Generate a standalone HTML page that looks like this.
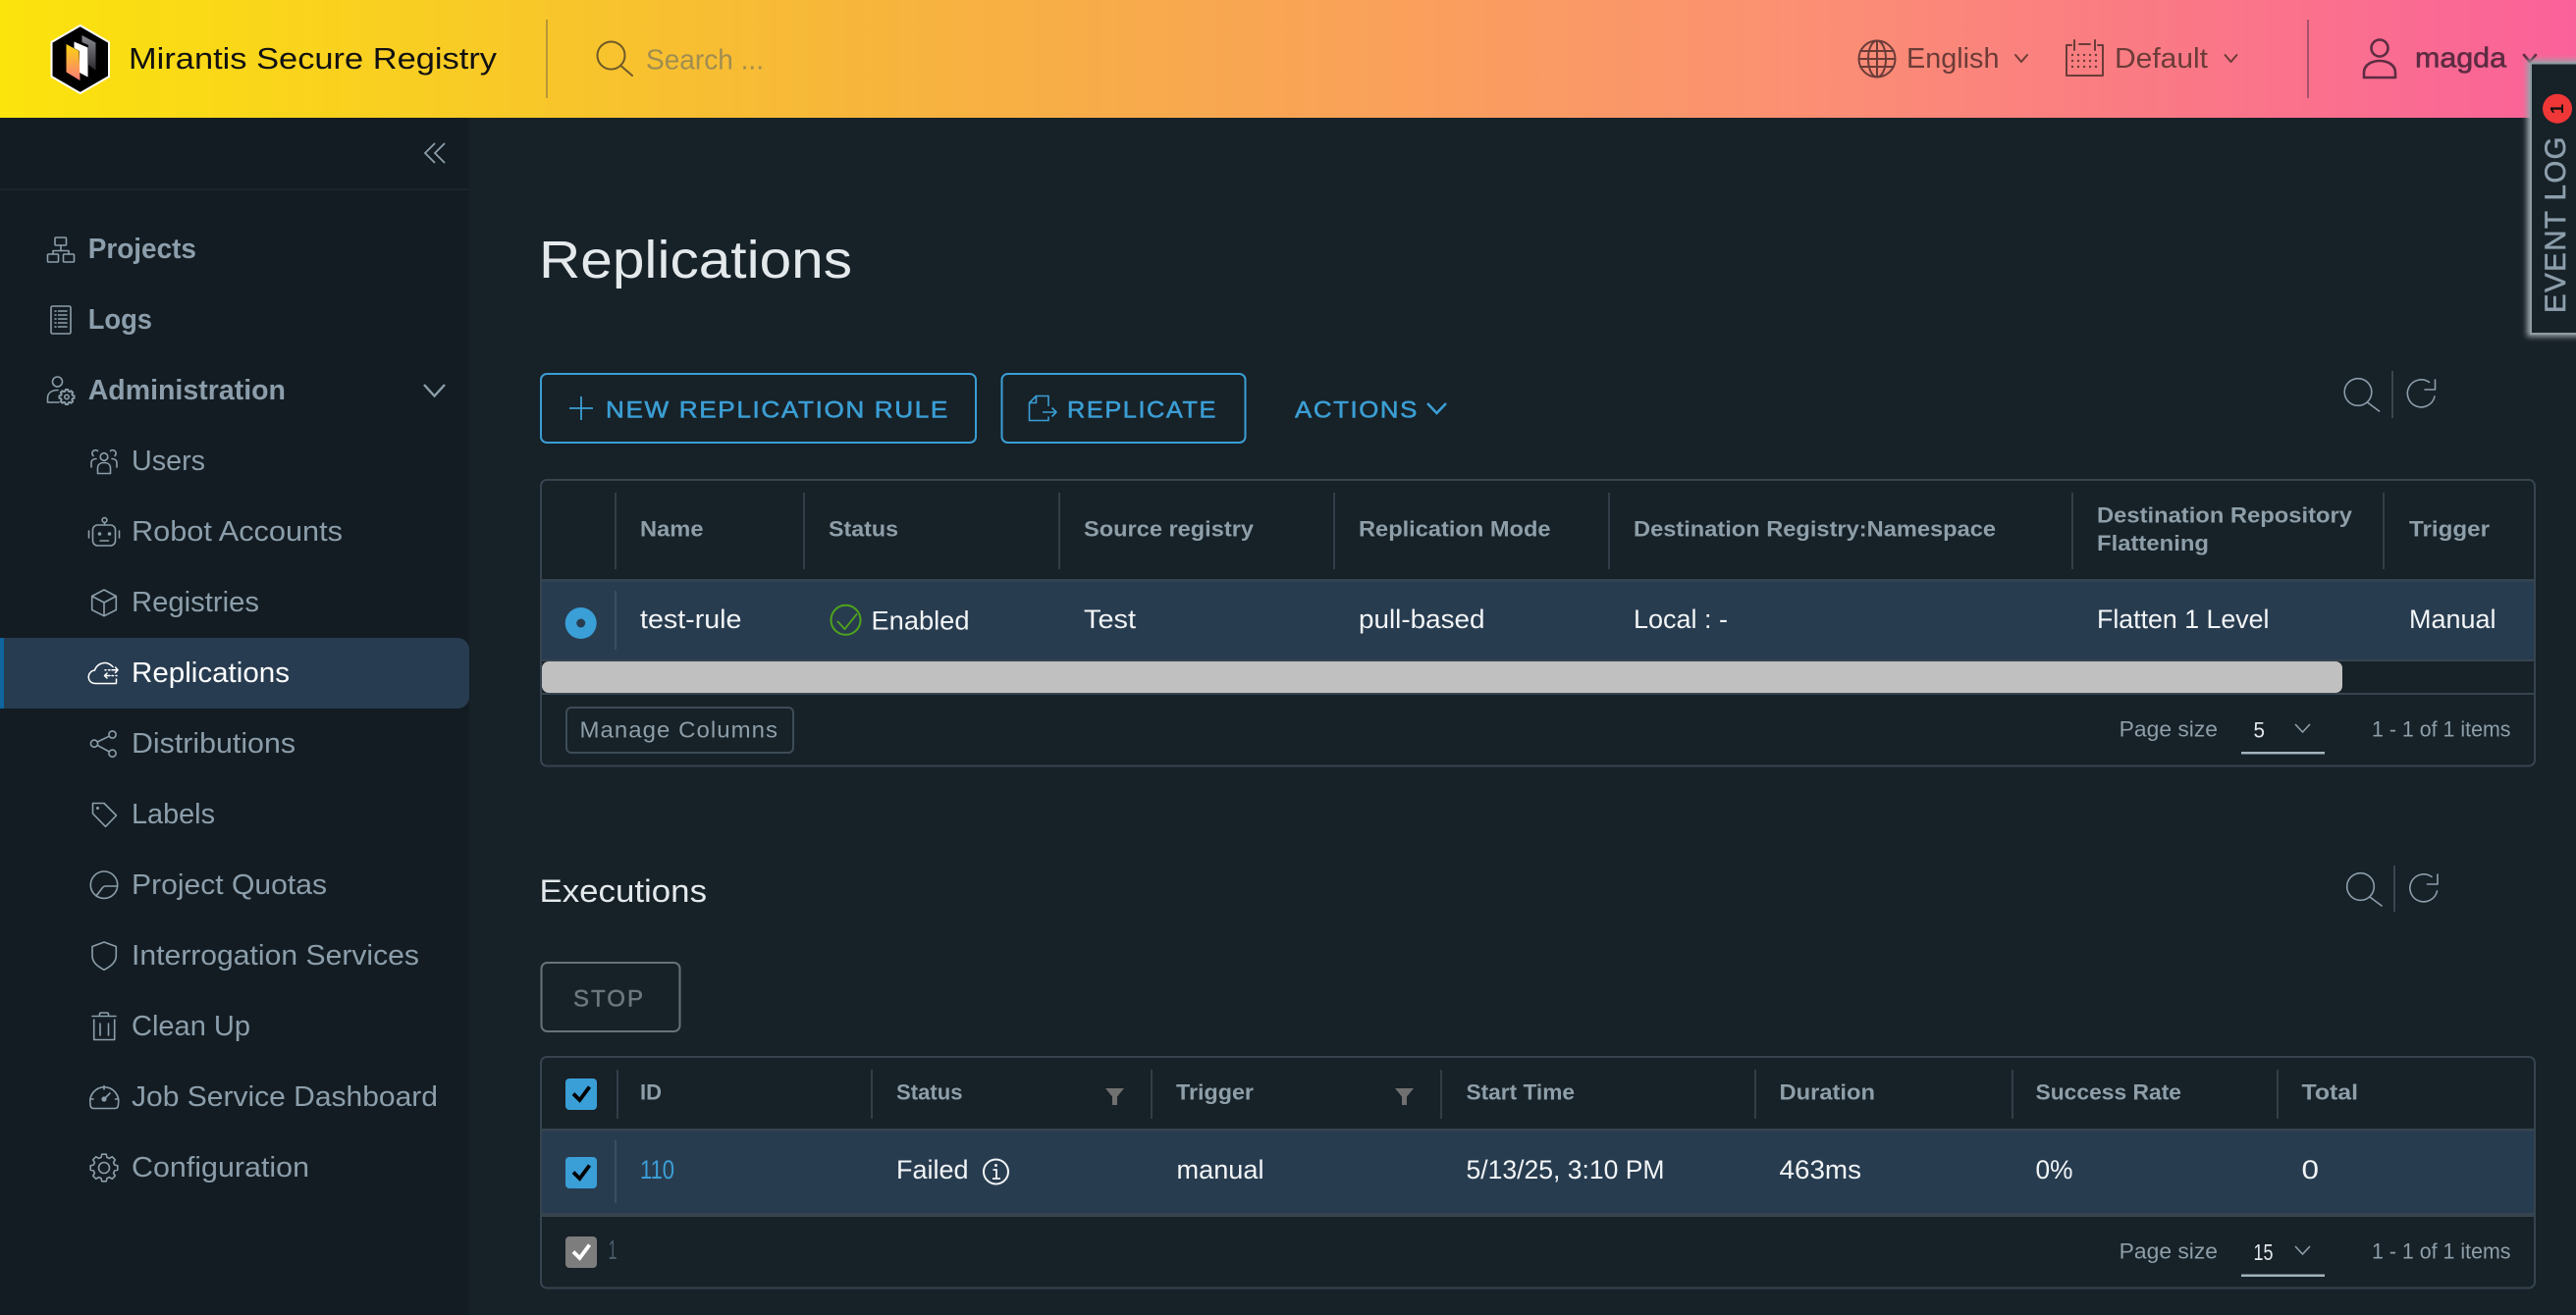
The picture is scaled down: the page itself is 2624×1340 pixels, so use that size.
<!DOCTYPE html>
<html lang="en">
<head>
<meta charset="utf-8">
<title>Replications - Mirantis Secure Registry</title>
<style>
html,body{margin:0;padding:0;width:2624px;height:1340px;overflow:hidden;background:#172128}
svg{display:block;position:absolute;left:0;top:0}
text{font-family:"Liberation Sans",sans-serif;white-space:pre}
.nav{font-size:29px;fill:#8c9eab}
.navb{font-size:29px;fill:#8c9eab;font-weight:700}
.th{font-size:22px;fill:#8e9fa9;font-weight:700}
.td{font-size:27px;fill:#f2f5f6}
.pg{font-size:22px;fill:#8e9fa9}
.btn{font-size:24px;fill:#3b9ed4;stroke:#3b9ed4;stroke-width:.55px;letter-spacing:1.5px}
.ic{fill:none;stroke:#8c9eab;stroke-width:1.6;stroke-linejoin:round;stroke-linecap:round}
.hd{fill:none;stroke:#6b3c38;stroke-width:2;stroke-linecap:round;stroke-linejoin:round}
</style>
</head>
<body>
<svg xmlns="http://www.w3.org/2000/svg" width="2624" height="1340" viewBox="0 0 2624 1340">
<defs>
<linearGradient id="hg" x1="0" y1="0" x2="1" y2="0">
<stop offset="0" stop-color="#fbe40c"/>
<stop offset="0.34" stop-color="#f7b53c"/>
<stop offset="0.68" stop-color="#fb9270"/>
<stop offset="1" stop-color="#fa619a"/>
</linearGradient>
<linearGradient id="lg1" x1="0" y1="0" x2="0" y2="1">
<stop offset="0" stop-color="#fbd40f"/>
<stop offset="1" stop-color="#fb7a7a"/>
</linearGradient>
<linearGradient id="lg2" x1="0" y1="0" x2="0" y2="1">
<stop offset="0" stop-color="#8b8b93"/>
<stop offset="1" stop-color="#2a2a2e"/>
</linearGradient>
<filter id="blur" x="-20%" y="-10%" width="140%" height="120%"><feGaussianBlur stdDeviation="3"/></filter>
<path id="gear" d="M-2.2,-13.8 L2.2,-13.8 L3,-10.6 L5.4,-9.6 L8.2,-11.3 L11.3,-8.2 L9.6,-5.4 L10.6,-3 L13.8,-2.2 L13.8,2.2 L10.6,3 L9.6,5.4 L11.3,8.2 L8.2,11.3 L5.4,9.6 L3,10.6 L2.2,13.8 L-2.2,13.8 L-3,10.6 L-5.4,9.6 L-8.2,11.3 L-11.3,8.2 L-9.6,5.4 L-10.6,3 L-13.8,2.2 L-13.8,-2.2 L-10.6,-3 L-9.6,-5.4 L-11.3,-8.2 L-8.2,-11.3 L-5.4,-9.6 L-3,-10.6 Z"/>
<g id="tsearch"><circle cx="2402" cy="399.5" r="13.8"/><path d="M2411.5,410 L2423.5,419"/></g>
<g id="trefresh"><path d="M2480,404 A14,14 0 1 1 2474.5,389.5"/><path d="M2480.5,387 V397 H2470"/></g>
</defs>

<!-- backgrounds -->
<rect width="2624" height="1340" fill="#172128"/>
<rect x="0" y="120" width="478" height="1220" fill="#131c22"/>
<rect x="0" y="192" width="478" height="2" fill="#1c252b"/>
<rect width="2624" height="120" fill="url(#hg)"/>

<!-- logo -->
<polygon points="81.7,26 111,43 111,78 81.7,95 52.5,78 52.5,43" fill="#000" stroke="#fff" stroke-width="2"/>
<polygon points="83.5,36 97.5,43.5 97.5,71.5 90,66 90,46 83.5,43" fill="url(#lg2)"/>
<polygon points="75.5,42.5 89.5,48.5 89.5,78.5 81,74 81,52 75.5,49" fill="#fff"/>
<polygon points="67.5,45 80.5,52 81.5,82 67.5,73.5" fill="url(#lg1)"/>
<text x="131" y="70" font-size="31" fill="#111" textLength="375" lengthAdjust="spacingAndGlyphs">Mirantis Secure Registry</text>
<rect x="556" y="20" width="2" height="80" fill="#b5983a"/>

<!-- header search -->
<g fill="none" stroke="#6e5a28" stroke-width="2" stroke-linecap="round"><circle cx="622.5" cy="56.5" r="14"/><path d="M632.5,67 L644,77"/></g>
<text x="658" y="70.5" font-size="29" fill="#a08d50" textLength="120" lengthAdjust="spacingAndGlyphs">Search ...</text>

<!-- header right -->
<g class="hd">
<circle cx="1912" cy="60" r="18.5"/><ellipse cx="1912" cy="60" rx="9" ry="18.5"/><path d="M1912,41.5 V78.5 M1895,52 H1929 M1895,68 H1929 M1893.5,60 H1930.5"/>
<path d="M2053,56 L2059,63 L2065,56"/>
<path d="M2110,46 H2105 V77 H2142 V46 H2137 M2113,41 V51 M2134,41 V51 M2118,45 H2129"/>
<path d="M2266.5,56 L2272.5,63 L2278.5,56"/>
</g>
<g fill="#6b3c38">
<circle cx="2111" cy="56" r="1.2"/><circle cx="2117" cy="56" r="1.2"/><circle cx="2123" cy="56" r="1.2"/><circle cx="2129" cy="56" r="1.2"/><circle cx="2135" cy="56" r="1.2"/>
<circle cx="2111" cy="62" r="1.2"/><circle cx="2117" cy="62" r="1.2"/><circle cx="2123" cy="62" r="1.2"/><circle cx="2129" cy="62" r="1.2"/><circle cx="2135" cy="62" r="1.2"/>
<circle cx="2111" cy="68" r="1.2"/><circle cx="2117" cy="68" r="1.2"/><circle cx="2123" cy="68" r="1.2"/><circle cx="2129" cy="68" r="1.2"/><circle cx="2135" cy="68" r="1.2"/>
</g>
<text x="1942" y="69" font-size="29" fill="#6b3c38" textLength="94.5" lengthAdjust="spacingAndGlyphs">English</text>
<text x="2154" y="69" font-size="29" fill="#6b3c38" textLength="95" lengthAdjust="spacingAndGlyphs">Default</text>
<rect x="2350" y="20" width="2" height="80" fill="#a9506c"/>
<g fill="none" stroke="#5d2c42" stroke-width="2.6" stroke-linejoin="round" stroke-linecap="round">
<circle cx="2424" cy="49" r="8.5"/>
<path d="M2408,79 V74 C2408,66 2416,62 2424,62 C2432,62 2440,66 2440,74 V79 Z"/>
<path d="M2571,56 L2577,63 L2583,56"/>
</g>
<text x="2460" y="68.5" font-size="29" fill="#5d2c42" stroke="#5d2c42" stroke-width=".6" textLength="93" lengthAdjust="spacingAndGlyphs">magda</text>

<!-- sidebar top -->
<path d="M443,146 L433,156 L443,166 M453,146 L443,156 L453,166" fill="none" stroke="#8c9eab" stroke-width="1.8"/>
<path d="M432,392 L442.5,403.5 L453,392" fill="none" stroke="#8c9eab" stroke-width="2.4"/>

<!-- active item -->
<path d="M0,650 H466 a12,12 0 0 1 12,12 V710 a12,12 0 0 1 -12,12 H0 Z" fill="#273c50"/>
<rect x="0" y="650" width="4" height="72" fill="#0f659d"/>

<!-- sidebar labels -->
<text class="navb" x="89.7" y="263" textLength="110.3" lengthAdjust="spacingAndGlyphs">Projects</text>
<text class="navb" x="89.7" y="335" textLength="65.3" lengthAdjust="spacingAndGlyphs">Logs</text>
<text class="navb" x="89.7" y="407" textLength="201.3" lengthAdjust="spacingAndGlyphs">Administration</text>
<text class="nav" x="134" y="479" textLength="75" lengthAdjust="spacingAndGlyphs">Users</text>
<text class="nav" x="134" y="551" textLength="215" lengthAdjust="spacingAndGlyphs">Robot Accounts</text>
<text class="nav" x="134" y="623" textLength="130" lengthAdjust="spacingAndGlyphs">Registries</text>
<text class="nav" x="134" y="695" textLength="161" lengthAdjust="spacingAndGlyphs" style="fill:#fff">Replications</text>
<text class="nav" x="134" y="767" textLength="167" lengthAdjust="spacingAndGlyphs">Distributions</text>
<text class="nav" x="134" y="839" textLength="85" lengthAdjust="spacingAndGlyphs">Labels</text>
<text class="nav" x="134" y="911" textLength="199" lengthAdjust="spacingAndGlyphs">Project Quotas</text>
<text class="nav" x="134" y="983" textLength="293" lengthAdjust="spacingAndGlyphs">Interrogation Services</text>
<text class="nav" x="134" y="1055" textLength="121" lengthAdjust="spacingAndGlyphs">Clean Up</text>
<text class="nav" x="134" y="1127" textLength="312" lengthAdjust="spacingAndGlyphs">Job Service Dashboard</text>
<text class="nav" x="134" y="1199" textLength="181" lengthAdjust="spacingAndGlyphs">Configuration</text>

<!-- sidebar icons -->
<g class="ic">
<!-- projects -->
<rect x="56" y="242" width="11.5" height="8" rx="1"/><rect x="48.5" y="259" width="11" height="8" rx="1"/><rect x="64.5" y="259" width="11" height="8" rx="1"/>
<path d="M62,250 V255.5 M54,259 V255.5 H70 V259"/>
<!-- logs -->
<rect x="52" y="312" width="20" height="28" rx="1.5"/>
<path d="M56,317 H57 M59.5,317 H68 M56,321 H57 M59.5,321 H68 M56,325 H57 M59.5,325 H68 M56,329 H57 M59.5,329 H68 M56,333 H57 M59.5,333 H68"/>
<!-- admin -->
<circle cx="58.5" cy="389" r="5"/>
<path d="M48.5,410 V406 C48.5,400 53,397.5 59,397.5 M48.5,410 H60"/>
<use href="#gear" transform="translate(68,404.5) scale(0.55)" style="stroke-width:3.5"/>
<circle cx="68" cy="404.5" r="2.2"/>
<!-- users -->
<circle cx="106" cy="465.5" r="3.8"/>
<path d="M99.5,482.5 V477 C99.5,473.5 102,471.5 106,471.5 C110,471.5 112.5,473.5 112.5,477 V482.5 Z"/>
<path d="M95,464.5 A3.2,3.2 0 1 1 99.5,459.5 M117,464.5 A3.2,3.2 0 1 0 112.5,459.5 M93,476 V472 C93,469 95,467.5 98,467.5 M119,476 V472 C119,469 117,467.5 114,467.5"/>
<!-- robot -->
<rect x="94.5" y="535" width="23" height="21" rx="5"/>
<circle cx="106.5" cy="530" r="2.4"/>
<path d="M106.5,532.5 V535 M102,551 H110.5 M90.5,541 V548 M121.5,541 V548"/>
<circle cx="101.5" cy="544" r="1" fill="#8c9eab"/><circle cx="111.5" cy="544" r="1" fill="#8c9eab"/>
<!-- cube -->
<path d="M106,601 L118.3,607.5 V621.5 L106,627.7 L93.7,621.5 V607.5 Z M93.7,607.5 L106,614 L118.3,607.5 M106,614 V627.7"/>
<!-- share -->
<circle cx="114.5" cy="748.5" r="3.6"/><circle cx="96" cy="757.7" r="3.6"/><circle cx="114.5" cy="767.7" r="3.6"/>
<path d="M111.3,750.2 L99.2,756 M99.2,759.4 L111.3,766"/>
<!-- tag -->
<path d="M94.5,818.5 H106 L118.5,831 L107.5,842.3 L94.5,829 Z"/>
<circle cx="99.5" cy="823.5" r="0.7" fill="#8c9eab"/>
<!-- quota -->
<circle cx="106" cy="901.7" r="13.7"/>
<path d="M98,913 L104.5,904.5 Q105.5,903 108,903 H119.5"/>
<!-- shield -->
<path d="M106,960 L118.3,964.5 V974 C118.3,981 112,985 106,988.3 C100,985 94,981 94,974 V964.5 Z"/>
<!-- trash -->
<path d="M94,1035.5 H118 M101.5,1035.5 V1033 Q101.5,1032 103,1032 H109 Q110.5,1032 110.5,1033 V1035.5 M95.7,1039 V1059.5 H116.7 V1039 M102,1043 V1055 M110.5,1043 V1055"/>
<!-- dashboard -->
<path d="M95.5,1129.5 Q92,1129.5 92,1125 A14.5,14.5 0 1 1 120.5,1125 Q120.5,1129.5 117,1129.5 Z"/>
<path d="M106,1106.5 V1110 M92,1120 H95 M117.5,1120 H120.5 M106,1120 L112,1114"/>
<circle cx="106" cy="1120" r="1.8" fill="#8c9eab"/>
<!-- gear -->
<use href="#gear" transform="translate(106,1190)"/>
<circle cx="106" cy="1190" r="5.5"/>
</g>
<!-- cloud -->
<g fill="none" stroke="#fff" stroke-width="1.5" stroke-linecap="round" stroke-linejoin="round">
<path d="M118,696.5 H97.5 C88,696.5 88,684 96.5,683 C98,678 103,675 108,675.5 C111,676 113,677.5 115,679.5"/>
<path d="M107,682.8 H108 M110.5,682.8 H112 M114,682.8 H120 M117.5,680 L120,682.8 L117.5,685.5"/>
<path d="M119,688.5 H118 M115.5,688.5 H114 M112,688.5 H106.5 M109,686 L106.5,688.5 L109,691 M118.5,692 V696"/>
</g>

<!-- title -->
<text x="549" y="283" font-size="54" fill="#e4e9ec" textLength="319" lengthAdjust="spacingAndGlyphs">Replications</text>

<!-- buttons -->
<rect x="551" y="381" width="443" height="70" rx="6" fill="none" stroke="#3b9ed4" stroke-width="2"/>
<path d="M592,404 V428 M580,416 H604" stroke="#3b9ed4" stroke-width="1.8" fill="none"/>
<text class="btn" x="617" y="425.5" textLength="350" lengthAdjust="spacingAndGlyphs">NEW REPLICATION RULE</text>
<rect x="1020.5" y="381" width="248" height="70" rx="6" fill="none" stroke="#3b9ed4" stroke-width="2"/>
<path d="M1068,414 V403.5 H1055.5 L1048.5,410.5 V428.5 H1068 V424.5 M1048.5,410.5 H1055.5 V403.5 M1062,420 H1076 M1071.5,415.5 L1076,420 L1071.5,424.5" stroke="#3b9ed4" stroke-width="1.6" fill="none" stroke-linejoin="round"/>
<text class="btn" x="1087" y="425.5" textLength="153" lengthAdjust="spacingAndGlyphs">REPLICATE</text>
<text class="btn" x="1319" y="425.5" textLength="126" lengthAdjust="spacingAndGlyphs">ACTIONS</text>
<path d="M1454,411 L1463.5,421 L1473,411" fill="none" stroke="#3b9ed4" stroke-width="2.6"/>

<!-- toolbar 1 -->
<g class="ic"><use href="#tsearch"/><use href="#trefresh"/></g>
<rect x="2436" y="378" width="2" height="48" fill="#3a4650"/>

<!-- table 1 -->
<rect x="551.5" y="592" width="2030" height="80" fill="#283c50"/>
<rect x="552" y="590" width="2030" height="2.5" fill="#36444f"/>
<rect x="552" y="672" width="2030" height="2" fill="#36444f"/>
<rect x="552" y="706" width="2030" height="2" fill="#36444f"/>
<rect x="552" y="674" width="1834" height="32" rx="7" fill="#c0c0c0"/>
<rect x="551" y="489" width="2031" height="291.5" rx="6" fill="none" stroke="#36444f" stroke-width="2"/>
<g fill="#323e47">
<rect x="626" y="502" width="2" height="78"/><rect x="818" y="502" width="2" height="78"/><rect x="1078" y="502" width="2" height="78"/><rect x="1358" y="502" width="2" height="78"/><rect x="1638" y="502" width="2" height="78"/><rect x="2110" y="502" width="2" height="78"/><rect x="2427" y="502" width="2" height="78"/>
</g>
<rect x="626" y="602" width="2" height="60" fill="#3a4f63"/>
<text class="th" x="652" y="546.5" textLength="64.5" lengthAdjust="spacingAndGlyphs">Name</text>
<text class="th" x="844" y="546.5" textLength="71" lengthAdjust="spacingAndGlyphs">Status</text>
<text class="th" x="1104" y="546.5" textLength="173" lengthAdjust="spacingAndGlyphs">Source registry</text>
<text class="th" x="1384" y="546.5" textLength="195.5" lengthAdjust="spacingAndGlyphs">Replication Mode</text>
<text class="th" x="1664" y="546.5" textLength="369" lengthAdjust="spacingAndGlyphs">Destination Registry:Namespace</text>
<text class="th" x="2136" y="532.5" textLength="260" lengthAdjust="spacingAndGlyphs">Destination Repository</text>
<text class="th" x="2136" y="561" textLength="114" lengthAdjust="spacingAndGlyphs">Flattening</text>
<text class="th" x="2454" y="546.5" textLength="82" lengthAdjust="spacingAndGlyphs">Trigger</text>
<circle cx="591.7" cy="635" r="16" fill="#3b9fd7"/><circle cx="591.7" cy="635" r="4.5" fill="#273c50"/>
<text class="td" x="652" y="640" textLength="103.5" lengthAdjust="spacingAndGlyphs">test-rule</text>
<circle cx="861.5" cy="631.8" r="15" fill="none" stroke="#4fa41a" stroke-width="2"/>
<path d="M853,633 L860.5,641 L873,625.5" fill="none" stroke="#4fa41a" stroke-width="1.8"/>
<text class="td" x="887.5" y="641.5" textLength="100" lengthAdjust="spacingAndGlyphs">Enabled</text>
<text class="td" x="1104" y="640" textLength="53" lengthAdjust="spacingAndGlyphs">Test</text>
<text class="td" x="1384" y="640" textLength="128.5" lengthAdjust="spacingAndGlyphs">pull-based</text>
<text class="td" x="1664" y="640" textLength="96" lengthAdjust="spacingAndGlyphs">Local : -</text>
<text class="td" x="2136" y="640" textLength="175.5" lengthAdjust="spacingAndGlyphs">Flatten 1 Level</text>
<text class="td" x="2454" y="640" textLength="88.5" lengthAdjust="spacingAndGlyphs">Manual</text>
<rect x="577" y="721" width="231" height="46" rx="5" fill="none" stroke="#3d4c57" stroke-width="2"/>
<text x="590.5" y="751.5" font-size="23" letter-spacing="1" fill="#8e9fa9" textLength="202.5" lengthAdjust="spacingAndGlyphs">Manage Columns</text>
<text class="pg" x="2158.7" y="750.5" textLength="100.3" lengthAdjust="spacingAndGlyphs">Page size</text>
<text x="2295.5" y="751.5" font-size="22" fill="#e4e9ec" textLength="11.5" lengthAdjust="spacingAndGlyphs">5</text>
<path d="M2338,738 L2345.5,746 L2353,738" fill="none" stroke="#8e9fa9" stroke-width="1.6"/>
<rect x="2283" y="766" width="85" height="2.5" fill="#a3b3bc"/>
<text class="pg" x="2416" y="750.5" textLength="141.5" lengthAdjust="spacingAndGlyphs">1 - 1 of 1 items</text>

<!-- executions -->
<text x="549.5" y="919" font-size="32" fill="#e4e9ec" textLength="170.5" lengthAdjust="spacingAndGlyphs">Executions</text>
<g class="ic" transform="translate(2.5,504)"><use href="#tsearch"/><use href="#trefresh"/></g>
<rect x="2438" y="882" width="2" height="47" fill="#3a4650"/>
<rect x="551.5" y="981" width="141" height="70" rx="6" fill="none" stroke="#687279" stroke-width="2"/>
<text x="584" y="1025.5" font-size="24" letter-spacing="2" fill="#6d777d" stroke="#6d777d" stroke-width=".5" textLength="73" lengthAdjust="spacingAndGlyphs">STOP</text>

<!-- table 2 -->
<rect x="551.5" y="1152" width="2030" height="84" fill="#283c50"/>
<rect x="552" y="1150" width="2030" height="2.5" fill="#36444f"/>
<rect x="552" y="1236" width="2030" height="4" fill="#36444f"/>
<rect x="551" y="1077" width="2031" height="235.5" rx="6" fill="none" stroke="#36444f" stroke-width="2"/>
<g fill="#323e47">
<rect x="628" y="1090" width="2" height="50"/><rect x="887" y="1090" width="2" height="50"/><rect x="1172" y="1090" width="2" height="50"/><rect x="1467" y="1090" width="2" height="50"/><rect x="1787" y="1090" width="2" height="50"/><rect x="2049" y="1090" width="2" height="50"/><rect x="2319" y="1090" width="2" height="50"/>
</g>
<rect x="626" y="1162" width="2" height="64" fill="#3a4f63"/>
<rect x="576" y="1099" width="32" height="32" rx="4" fill="#3b9fd7"/>
<path d="M584,1114.5 L590.5,1121 L600.5,1107.5" fill="none" stroke="#000" stroke-width="3.8"/>
<rect x="576" y="1179" width="32" height="32" rx="4" fill="#3b9fd7"/>
<path d="M584,1194.5 L590.5,1201 L600.5,1187.5" fill="none" stroke="#000" stroke-width="3.8"/>
<rect x="576" y="1260" width="32" height="32" rx="4" fill="#7d7d7d"/>
<path d="M584,1275.5 L590.5,1282 L600.5,1268.5" fill="none" stroke="#fff" stroke-width="3.8"/>
<text x="619.5" y="1283" font-size="28" fill="#4a5c6b" textLength="9" lengthAdjust="spacingAndGlyphs">1</text>
<text class="th" x="652" y="1120.5" textLength="22" lengthAdjust="spacingAndGlyphs">ID</text>
<text class="th" x="913" y="1120.5" textLength="67.5" lengthAdjust="spacingAndGlyphs">Status</text>
<polygon points="1126,1109 1145,1109 1138,1117.5 1138,1126 1133,1126 1133,1117.5" fill="#707070"/>
<text class="th" x="1198" y="1120.5" textLength="79" lengthAdjust="spacingAndGlyphs">Trigger</text>
<polygon points="1421,1109 1440,1109 1433,1117.5 1433,1126 1428,1126 1428,1117.5" fill="#707070"/>
<text class="th" x="1493.5" y="1120.5" textLength="110.5" lengthAdjust="spacingAndGlyphs">Start Time</text>
<text class="th" x="1812.5" y="1120.5" textLength="97.5" lengthAdjust="spacingAndGlyphs">Duration</text>
<text class="th" x="2073.5" y="1120.5" textLength="148.5" lengthAdjust="spacingAndGlyphs">Success Rate</text>
<text class="th" x="2344.5" y="1120.5" textLength="57.5" lengthAdjust="spacingAndGlyphs">Total</text>
<text class="td" x="652" y="1201" textLength="35" lengthAdjust="spacingAndGlyphs" style="fill:#3b9fd7">110</text>
<text class="td" x="913" y="1201" textLength="73.5" lengthAdjust="spacingAndGlyphs">Failed</text>
<circle cx="1014.5" cy="1194" r="12.5" fill="none" stroke="#f2f5f6" stroke-width="2"/>
<path d="M1011.5,1192 H1015 V1201 M1011,1201 H1019" fill="none" stroke="#f2f5f6" stroke-width="1.8"/>
<circle cx="1014.5" cy="1187.5" r="1.5" fill="#f2f5f6"/>
<text class="td" x="1198.5" y="1201" textLength="89" lengthAdjust="spacingAndGlyphs">manual</text>
<text class="td" x="1493.5" y="1201" textLength="202" lengthAdjust="spacingAndGlyphs">5/13/25, 3:10 PM</text>
<text class="td" x="1812.5" y="1201" textLength="83.5" lengthAdjust="spacingAndGlyphs">463ms</text>
<text class="td" x="2073.5" y="1201" textLength="38" lengthAdjust="spacingAndGlyphs">0%</text>
<text class="td" x="2344.5" y="1201" textLength="17.5" lengthAdjust="spacingAndGlyphs">0</text>
<text class="pg" x="2158.7" y="1282.5" textLength="100.3" lengthAdjust="spacingAndGlyphs">Page size</text>
<text x="2295.5" y="1284" font-size="23" fill="#e4e9ec" textLength="20" lengthAdjust="spacingAndGlyphs">15</text>
<path d="M2338,1270 L2345.5,1278 L2353,1270" fill="none" stroke="#8e9fa9" stroke-width="1.6"/>
<rect x="2283" y="1298.5" width="85" height="2.5" fill="#a3b3bc"/>
<text class="pg" x="2416" y="1282.5" textLength="141.5" lengthAdjust="spacingAndGlyphs">1 - 1 of 1 items</text>

<!-- event log tab -->
<rect x="2574" y="61" width="70" height="282" fill="#9aa3a8" filter="url(#blur)"/>
<rect x="2578" y="64.5" width="60" height="275.5" fill="#172128" stroke="#8f9aa1" stroke-width="2"/>
<text transform="translate(2613,319) rotate(-90)" font-size="30" letter-spacing="1.5" fill="#8c9eab" stroke="#8c9eab" stroke-width=".6" textLength="181" lengthAdjust="spacingAndGlyphs">EVENT LOG</text>
<circle cx="2605" cy="110.7" r="15" fill="#ef3737"/>
<text transform="translate(2611,116) rotate(-90)" font-size="18" font-weight="700" fill="#111">1</text>
</svg>
</body>
</html>
